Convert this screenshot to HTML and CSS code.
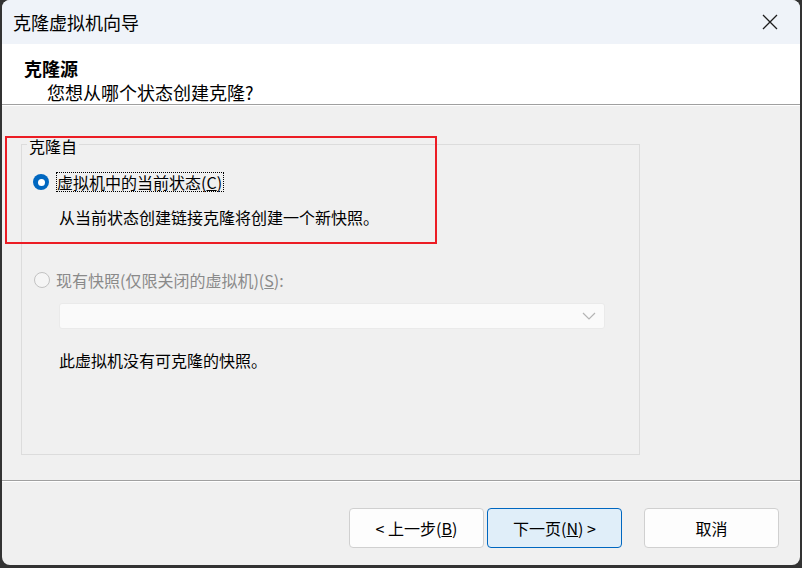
FILE: index.html
```html
<!DOCTYPE html>
<html lang="zh-CN">
<head>
    <meta charset="UTF-8">
    <title>克隆虚拟机向导</title>
    <link rel="stylesheet" href="styles.css">
</head>
<body>
    <div class="window">
        <div class="titlebar">
            <span class="title">克隆虚拟机向导</span>
            <span class="close">
                <svg width="16" height="16" viewBox="0 0 16 16"><path d="M1 1L15 15M15 1L1 15" stroke="#1c1c1c" stroke-width="1.3" fill="none"/></svg>
            </span>
        </div>
        <div class="header">
            <div class="head-title">克隆源</div>
            <div class="head-sub">您想从哪个状态创建克隆?</div>
        </div>
        <div class="main">
            <div class="group">
                <span class="legend">克隆自</span>
                <div class="row">
                    <span class="radio checked"></span>
                    <span class="label focus">虚拟机中的当前状态(<u>C</u>)</span>
                </div>
                <div class="desc">从当前状态创建链接克隆将创建一个新快照。</div>
                <div class="row row2">
                    <span class="radio disabled"></span>
                    <span class="label grey">现有快照(仅限关闭的虚拟机)(<u>S</u>):</span>
                </div>
                <div class="combo">
                    <svg width="14" height="8" viewBox="0 0 14 8"><path d="M1 1L7 7L13 1" stroke="#b4b4b4" stroke-width="1.2" fill="none"/></svg>
                </div>
                <div class="desc note">此虚拟机没有可克隆的快照。</div>
            </div>
            <div class="mark"></div>
        </div>
        <div class="footer">
            <button class="btn">&lt; 上一步(<u>B</u>)</button>
            <button class="btn primary">下一页(<u>N</u>) &gt;</button>
            <button class="btn cancel">取消</button>
        </div>
    </div>
</body>
</html>
```

FILE: styles.css
```css
body {
    margin: 0;
    padding: 0 2px 3px 2px;
    background-color: #333;
    font-family: "Noto Sans CJK SC", "Noto Sans", sans-serif;
    font-size: 16px;
    color: #000;
}
.window {
    width: 798px;
    height: 565px;
    background-color: #f0f0f0;
    border-radius: 8px;
    overflow: hidden;
    display: flex;
    flex-direction: column;
}
.titlebar {
    height: 44px;
    flex: none;
    background-color: #eff3f9;
    display: flex;
    align-items: center;
    justify-content: space-between;
    padding: 0 22px 0 11px;
}
.title {
    font-size: 18px;
    line-height: 22px;
}
.close {
    display: flex;
}
.header {
    flex: none;
    background-color: #fff;
    border-bottom: 1px solid #a0a0a0;
    box-shadow: 0 1px 0 #fff;
    padding-left: 22px;
    box-sizing: border-box;
    height: 61px;
}
.head-title {
    font-weight: bold;
    font-size: 18px;
    line-height: 22px;
    margin-top: 13px;
}
.head-sub {
    font-size: 18px;
    line-height: 22px;
    margin-top: 2px;
    padding-left: 23px;
}
.main {
    flex: 1;
    position: relative;
    margin-top: 1px;
    border-bottom: 1px solid #a0a0a0;
    box-shadow: 0 1px 0 #fff;
}
.group {
    box-sizing: border-box;
    width: 619px;
    height: 311px;
    margin: 38px 0 0 19px;
    border: 1px solid #dcdcdc;
}
.legend {
    display: block;
    width: fit-content;
    margin: -9px 0 0 5px;
    padding: 0 2px;
    line-height: 20px;
    background-color: #f0f0f0;
}
.row {
    display: flex;
    align-items: center;
    height: 20px;
    margin-top: 16px;
    padding-left: 11px;
}
.row2 {
    margin-top: 43px;
    padding-left: 12px;
}
.radio {
    width: 16px;
    height: 16px;
    box-sizing: border-box;
    border-radius: 50%;
    flex: none;
    margin-right: 7px;
}
.radio.checked {
    background-color: #0067c0;
    display: flex;
    align-items: center;
    justify-content: center;
}
.radio.checked::after {
    content: "";
    width: 7px;
    height: 7px;
    border-radius: 50%;
    background-color: #fff;
}
.radio.disabled {
    border: 1px solid #c2c2c2;
    background-color: #f5f5f5;
    margin-right: 6px;
}
.label {
    line-height: 18px;
}
.focus {
    border: 1px dotted #000;
    padding: 0 1px 0 0;
}
.grey {
    color: #8a8a8a;
}
.desc {
    line-height: 20px;
    margin-top: 15px;
    padding-left: 37px;
}
.combo {
    box-sizing: border-box;
    width: 546px;
    height: 26px;
    margin: 13px 0 0 37px;
    background-color: #fafafa;
    border: 1px solid #eaeaea;
    border-radius: 3px;
    display: flex;
    align-items: center;
    justify-content: flex-end;
    padding-right: 8px;
}
.note {
    margin-top: 21px;
}
.mark {
    position: absolute;
    left: 3px;
    top: 30px;
    width: 432px;
    height: 108px;
    box-sizing: border-box;
    border: 2px solid #ec1c24;
}
.footer {
    height: 83px;
    flex: none;
    margin-top: 1px;
    display: flex;
    justify-content: flex-end;
    align-items: flex-start;
    padding: 26px 21px 0 0;
    box-sizing: border-box;
}
.btn {
    width: 135px;
    height: 40px;
    margin-left: 3px;
    background-color: #fdfdfd;
    border: 1px solid #d0d0d0;
    border-radius: 4px;
    font-family: "Noto Sans CJK SC", "Noto Sans", sans-serif;
    font-size: 16px;
    color: #000;
    padding: 0;
}
.btn.primary {
    background-color: #e0eef9;
    border-color: #0067c0;
}
.btn.cancel {
    margin-left: 22px;
}
```
